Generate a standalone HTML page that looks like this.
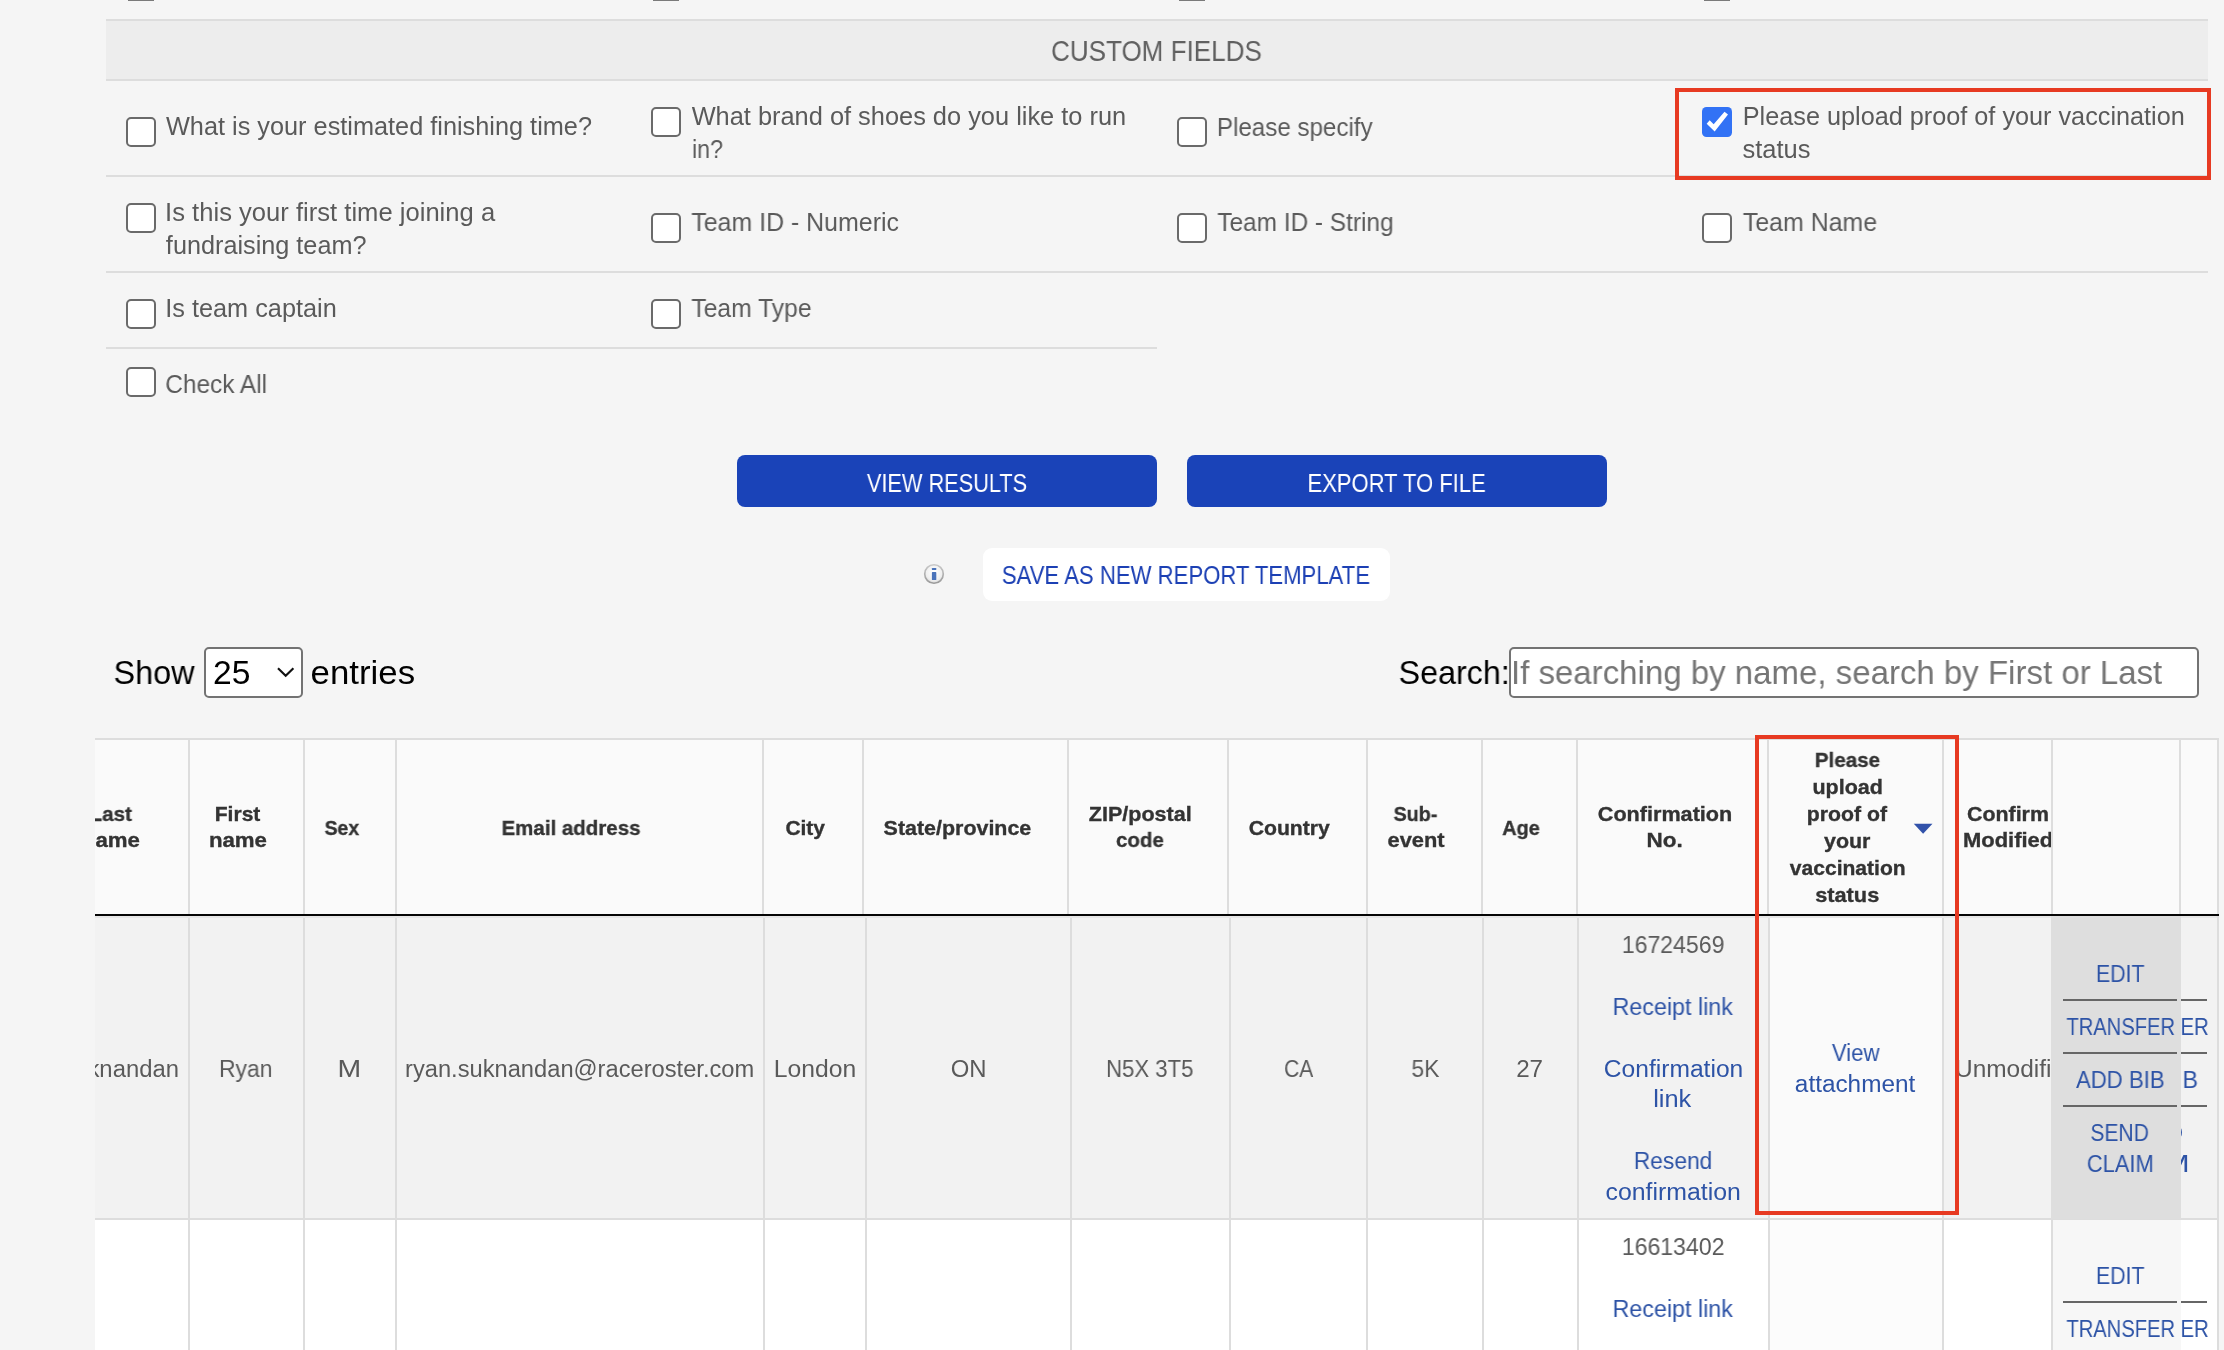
<!DOCTYPE html><html><head><meta charset="utf-8"><title>Participant report</title><style>
html,body{margin:0;padding:0}html{width:2224px;height:1350px;overflow:hidden}body{width:2224px;height:1350px;overflow:hidden;position:relative;background:#f5f5f5;font-family:"Liberation Sans",sans-serif}
.b{position:absolute}.t{position:absolute;left:0;top:0;white-space:nowrap;transform-origin:0 0;display:block;will-change:transform}
.g{position:absolute;left:0;top:0;width:2224px;height:1350px}
.cb{position:absolute;width:26px;height:26px;border:2px solid #6a6a6a;border-radius:5px;background:#fff}
</style></head><body>
<div class="b" style="left:106px;top:21px;width:2102px;height:58px;background:#ededed;"></div>
<div class="b" style="left:106px;top:19px;width:2102px;height:2px;background:#dddddd;"></div>
<div class="b" style="left:106px;top:79px;width:2102px;height:2px;background:#dddddd;"></div>
<div class="b" style="left:106px;top:175px;width:2102px;height:2px;background:#dddddd;"></div>
<div class="b" style="left:106px;top:271px;width:2102px;height:2px;background:#dddddd;"></div>
<div class="b" style="left:106px;top:347px;width:1051px;height:2px;background:#dddddd;"></div>
<div class="b" style="left:128px;top:0px;width:26px;height:1px;background:#7a7a7a;"></div>
<div class="b" style="left:653px;top:0px;width:26px;height:1px;background:#7a7a7a;"></div>
<div class="b" style="left:1179px;top:0px;width:26px;height:1px;background:#7a7a7a;"></div>
<div class="b" style="left:1704px;top:0px;width:26px;height:1px;background:#7a7a7a;"></div>
<div class="cb" style="left:126px;top:117px"></div>
<div class="cb" style="left:651px;top:107px"></div>
<div class="cb" style="left:1177px;top:117px"></div>
<div class="cb" style="left:126px;top:203px"></div>
<div class="cb" style="left:651px;top:213px"></div>
<div class="cb" style="left:1177px;top:213px"></div>
<div class="cb" style="left:1702px;top:213px"></div>
<div class="cb" style="left:126px;top:299px"></div>
<div class="cb" style="left:651px;top:299px"></div>
<div class="cb" style="left:126px;top:367px"></div>
<svg class="b" style="left:1702px;top:107px" width="30" height="30" viewBox="0 0 30 30"><rect width="30" height="30" rx="4.5" fill="#3272f5"/><polygon points="4.67,16.67 7.67,13.17 11.67,17.33 22.5,4.67 26,7.5 12.67,24.5" fill="#fff"/></svg>
<div class="b" style="left:737px;top:455px;width:420px;height:52px;background:#1a43b8;border-radius:8px"></div>
<div class="b" style="left:1187px;top:455px;width:420px;height:52px;background:#1a43b8;border-radius:8px"></div>
<div class="b" style="left:983px;top:548px;width:407px;height:53px;background:#ffffff;border-radius:9px"></div>
<svg class="b" style="left:922px;top:562px;filter:blur(0.45px)" width="24" height="24" viewBox="0 0 24 24"><defs><radialGradient id="ig" cx="50%" cy="40%" r="60%"><stop offset="0" stop-color="#ffffff"/><stop offset="0.7" stop-color="#f0f0f0"/><stop offset="1" stop-color="#d8d8d8"/></radialGradient><linearGradient id="ir" x1="0" y1="0" x2="0" y2="1"><stop offset="0" stop-color="#c8c8c8"/><stop offset="1" stop-color="#9a9a9a"/></linearGradient></defs><circle cx="12" cy="12" r="9.3" fill="url(#ig)" stroke="url(#ir)" stroke-width="1.6"/><rect x="9.9" y="6" width="4.4" height="2" rx="0.6" fill="#4a73ba"/><rect x="9.9" y="10.1" width="4.4" height="8" rx="0.6" fill="#4a73ba"/></svg>
<div class="b" style="left:204px;top:647px;width:99px;height:51px;background:#ffffff;box-sizing:border-box;border:2px solid #737373;border-radius:5px"></div>
<svg class="b" style="left:274px;top:662px" width="24" height="20" viewBox="0 0 24 20"><polyline points="4,6.3 11.7,13.7 19.4,6.3" fill="none" stroke="#111" stroke-width="2.2"/></svg>
<div class="b" style="left:1509px;top:647px;width:690px;height:51px;background:#ffffff;box-sizing:border-box;border:2px solid #737373;border-radius:5px"></div>
<div class="b" style="left:95px;top:738px;width:2124px;height:2px;background:#dddddd;"></div>
<div class="b" style="left:95px;top:740px;width:2124px;height:174px;background:#fafafa;"></div>
<div class="b" style="left:95px;top:916px;width:2124px;height:302px;background:#f2f2f2;"></div>
<div class="b" style="left:95px;top:1218px;width:2124px;height:2px;background:#dddddd;"></div>
<div class="b" style="left:95px;top:1220px;width:2124px;height:130px;background:#ffffff;"></div>
<div class="b" style="left:1770px;top:916px;width:172px;height:302px;background:#fafafa;"></div>
<div class="b" style="left:1770px;top:1220px;width:172px;height:130px;background:#fcfcfc;"></div>
<div class="b" style="left:188px;top:740px;width:2px;height:174px;background:#dddddd;"></div>
<div class="b" style="left:303px;top:740px;width:2px;height:174px;background:#dddddd;"></div>
<div class="b" style="left:395px;top:740px;width:2px;height:174px;background:#dddddd;"></div>
<div class="b" style="left:762px;top:740px;width:2px;height:174px;background:#dddddd;"></div>
<div class="b" style="left:862px;top:740px;width:2px;height:174px;background:#dddddd;"></div>
<div class="b" style="left:1067px;top:740px;width:2px;height:174px;background:#dddddd;"></div>
<div class="b" style="left:1227px;top:740px;width:2px;height:174px;background:#dddddd;"></div>
<div class="b" style="left:1366px;top:740px;width:2px;height:174px;background:#dddddd;"></div>
<div class="b" style="left:1481px;top:740px;width:2px;height:174px;background:#dddddd;"></div>
<div class="b" style="left:1576px;top:740px;width:2px;height:174px;background:#dddddd;"></div>
<div class="b" style="left:1767px;top:740px;width:2px;height:174px;background:#dddddd;"></div>
<div class="b" style="left:1942px;top:740px;width:2px;height:174px;background:#dddddd;"></div>
<div class="b" style="left:2051px;top:740px;width:2px;height:174px;background:#dddddd;"></div>
<div class="b" style="left:2179px;top:740px;width:2px;height:174px;background:#dddddd;"></div>
<div class="b" style="left:188px;top:916px;width:2px;height:434px;background:#dddddd;"></div>
<div class="b" style="left:303px;top:916px;width:2px;height:434px;background:#dddddd;"></div>
<div class="b" style="left:395px;top:916px;width:2px;height:434px;background:#dddddd;"></div>
<div class="b" style="left:763px;top:916px;width:2px;height:434px;background:#dddddd;"></div>
<div class="b" style="left:865px;top:916px;width:2px;height:434px;background:#dddddd;"></div>
<div class="b" style="left:1070px;top:916px;width:2px;height:434px;background:#dddddd;"></div>
<div class="b" style="left:1229px;top:916px;width:2px;height:434px;background:#dddddd;"></div>
<div class="b" style="left:1366px;top:916px;width:2px;height:434px;background:#dddddd;"></div>
<div class="b" style="left:1482px;top:916px;width:2px;height:434px;background:#dddddd;"></div>
<div class="b" style="left:1577px;top:916px;width:2px;height:434px;background:#dddddd;"></div>
<div class="b" style="left:1768px;top:916px;width:2px;height:434px;background:#dddddd;"></div>
<div class="b" style="left:1942px;top:916px;width:2px;height:434px;background:#dddddd;"></div>
<div class="b" style="left:2217px;top:738px;width:2px;height:612px;background:#dddddd;"></div>
<div class="b" style="left:95px;top:914px;width:2124px;height:2px;background:#050505;"></div>
<div class="b" style="left:95px;top:916px;width:1956px;height:2px;background:#e7e7e7;"></div>
<div class="b" style="left:2181px;top:916px;width:36px;height:2px;background:#e7e7e7;"></div>
<div class="b" style="left:2051px;top:916px;width:130px;height:303px;background:#dedede;"></div>
<div class="b" style="left:2051px;top:1220px;width:2px;height:130px;background:#dddddd;"></div>
<div class="b" style="left:2053px;top:1220px;width:128px;height:130px;background:#f7f7f7;"></div>
<div class="b" style="left:2063px;top:999px;width:114px;height:2px;background:#666666;"></div>
<div class="b" style="left:2181px;top:999px;width:26px;height:2px;background:#666666;"></div>
<div class="b" style="left:2063px;top:1052px;width:114px;height:2px;background:#666666;"></div>
<div class="b" style="left:2181px;top:1052px;width:26px;height:2px;background:#666666;"></div>
<div class="b" style="left:2063px;top:1105px;width:114px;height:2px;background:#666666;"></div>
<div class="b" style="left:2181px;top:1105px;width:26px;height:2px;background:#666666;"></div>
<div class="b" style="left:2063px;top:1301px;width:114px;height:2px;background:#666666;"></div>
<div class="b" style="left:2181px;top:1301px;width:26px;height:2px;background:#666666;"></div>
<svg class="b" style="left:1913px;top:823px" width="21" height="12" viewBox="0 0 21 12"><polygon points="0.75,0.75 19.5,0.75 10.1,10.75" fill="#3152aa"/></svg>
<span class="t" style="font-size:29.12px;line-height:29.12px;color:#606060;transform:translate(1051.07px,37px) scaleX(0.8943)">CUSTOM FIELDS</span><span class="t" style="font-size:24.96px;line-height:24.96px;color:#5a5a5a;transform:translate(165.93px,114px) scaleX(1.0139)">What is your estimated finishing time?</span><span class="t" style="font-size:24.96px;line-height:24.96px;color:#5a5a5a;transform:translate(691.63px,104px) scaleX(1.0171)">What brand of shoes do you like to run</span><span class="t" style="font-size:24.96px;line-height:24.96px;color:#5a5a5a;transform:translate(692.02px,137px) scaleX(0.9272)">in?</span><span class="t" style="font-size:24.96px;line-height:24.96px;color:#5a5a5a;transform:translate(1216.89px,115px) scaleX(0.9676)">Please specify</span><span class="t" style="font-size:24.96px;line-height:24.96px;color:#5a5a5a;transform:translate(1742.76px,104px) scaleX(1.0116)">Please upload proof of your vaccination</span><span class="t" style="font-size:24.96px;line-height:24.96px;color:#5a5a5a;transform:translate(1742.45px,137px) scaleX(1.0217)">status</span><span class="t" style="font-size:24.96px;line-height:24.96px;color:#5a5a5a;transform:translate(165.09px,200px) scaleX(1.0258)">Is this your first time joining a</span><span class="t" style="font-size:24.96px;line-height:24.96px;color:#5a5a5a;transform:translate(165.87px,233px) scaleX(1.0115)">fundraising team?</span><span class="t" style="font-size:24.96px;line-height:24.96px;color:#5a5a5a;transform:translate(691.34px,210px) scaleX(0.9980)">Team ID - Numeric</span><span class="t" style="font-size:24.96px;line-height:24.96px;color:#5a5a5a;transform:translate(1217.34px,210px) scaleX(0.9774)">Team ID - String</span><span class="t" style="font-size:24.96px;line-height:24.96px;color:#5a5a5a;transform:translate(1742.87px,210px) scaleX(0.9976)">Team Name</span><span class="t" style="font-size:24.96px;line-height:24.96px;color:#5a5a5a;transform:translate(165.19px,296px) scaleX(1.0140)">Is team captain</span><span class="t" style="font-size:24.96px;line-height:24.96px;color:#5a5a5a;transform:translate(691.34px,296px) scaleX(0.9891)">Team Type</span><span class="t" style="font-size:24.96px;line-height:24.96px;color:#5a5a5a;transform:translate(165.24px,372px) scaleX(0.9787)">Check All</span><span class="t" style="font-size:26.52px;line-height:26.52px;color:#ffffff;transform:translate(866.89px,470px) scaleX(0.8197)">VIEW RESULTS</span><span class="t" style="font-size:26.52px;line-height:26.52px;color:#ffffff;transform:translate(1307.45px,470px) scaleX(0.8306)">EXPORT TO FILE</span><span class="t" style="font-size:26.0px;line-height:26.0px;color:#1c40b4;transform:translate(1001.84px,562px) scaleX(0.8512)">SAVE AS NEW REPORT TEMPLATE</span><span class="t" style="font-size:33.28px;line-height:33.28px;color:#000000;transform:translate(113.53px,656px) scaleX(0.9729)">Show</span><span class="t" style="font-size:33.28px;line-height:33.28px;color:#000000;transform:translate(213.02px,656px) scaleX(1.0103)">25</span><span class="t" style="font-size:33.28px;line-height:33.28px;color:#000000;transform:translate(310.58px,656px) scaleX(1.0462)">entries</span><span class="t" style="font-size:33.28px;line-height:33.28px;color:#000000;transform:translate(1398.58px,656px) scaleX(0.9691)">Search:</span><span class="t" style="font-size:33.28px;line-height:33.28px;color:#757575;transform:translate(1510.98px,656px) scaleX(0.9922)">If searching by name, search by First or Last</span><span class="t" style="font-size:20.8px;line-height:20.8px;color:#333333;transform:translate(214.72px,804px) scaleX(1.0131);font-weight:700;-webkit-text-stroke:0.35px #333333">First</span><span class="t" style="font-size:20.8px;line-height:20.8px;color:#333333;transform:translate(208.88px,830px) scaleX(1.0697);font-weight:700;-webkit-text-stroke:0.35px #333333">name</span><span class="t" style="font-size:20.8px;line-height:20.8px;color:#333333;transform:translate(324.62px,818px) scaleX(0.9319);font-weight:700;-webkit-text-stroke:0.35px #333333">Sex</span><span class="t" style="font-size:20.8px;line-height:20.8px;color:#333333;transform:translate(501.53px,818px) scaleX(0.9851);font-weight:700;-webkit-text-stroke:0.35px #333333">Email address</span><span class="t" style="font-size:20.8px;line-height:20.8px;color:#333333;transform:translate(785.38px,818px) scaleX(1.0068);font-weight:700;-webkit-text-stroke:0.35px #333333">City</span><span class="t" style="font-size:20.8px;line-height:20.8px;color:#333333;transform:translate(883.58px,818px) scaleX(1.0307);font-weight:700;-webkit-text-stroke:0.35px #333333">State/province</span><span class="t" style="font-size:20.8px;line-height:20.8px;color:#333333;transform:translate(1088.78px,804px) scaleX(1.0349);font-weight:700;-webkit-text-stroke:0.35px #333333">ZIP/postal</span><span class="t" style="font-size:20.8px;line-height:20.8px;color:#333333;transform:translate(1116.03px,830px) scaleX(0.9845);font-weight:700;-webkit-text-stroke:0.35px #333333">code</span><span class="t" style="font-size:20.8px;line-height:20.8px;color:#333333;transform:translate(1248.65px,818px) scaleX(1.0188);font-weight:700;-webkit-text-stroke:0.35px #333333">Country</span><span class="t" style="font-size:20.8px;line-height:20.8px;color:#333333;transform:translate(1393.57px,804px) scaleX(0.9483);font-weight:700;-webkit-text-stroke:0.35px #333333">Sub-</span><span class="t" style="font-size:20.8px;line-height:20.8px;color:#333333;transform:translate(1387.53px,830px) scaleX(1.0509);font-weight:700;-webkit-text-stroke:0.35px #333333">event</span><span class="t" style="font-size:20.8px;line-height:20.8px;color:#333333;transform:translate(1502.23px,818px) scaleX(0.9546);font-weight:700;-webkit-text-stroke:0.35px #333333">Age</span><span class="t" style="font-size:20.8px;line-height:20.8px;color:#333333;transform:translate(1597.79px,804px) scaleX(1.0390);font-weight:700;-webkit-text-stroke:0.35px #333333">Confirmation</span><span class="t" style="font-size:20.8px;line-height:20.8px;color:#333333;transform:translate(1646.62px,830px) scaleX(1.0791);font-weight:700;-webkit-text-stroke:0.35px #333333">No.</span><span class="t" style="font-size:20.8px;line-height:20.8px;color:#333333;transform:translate(1814.76px,750px) scaleX(0.9913);font-weight:700;-webkit-text-stroke:0.35px #333333">Please</span><span class="t" style="font-size:20.8px;line-height:20.8px;color:#333333;transform:translate(1812.45px,777px) scaleX(1.0320);font-weight:700;-webkit-text-stroke:0.35px #333333">upload</span><span class="t" style="font-size:20.8px;line-height:20.8px;color:#333333;transform:translate(1806.86px,804px) scaleX(1.0207);font-weight:700;-webkit-text-stroke:0.35px #333333">proof of</span><span class="t" style="font-size:20.8px;line-height:20.8px;color:#333333;transform:translate(1823.96px,831px) scaleX(1.0306);font-weight:700;-webkit-text-stroke:0.35px #333333">your</span><span class="t" style="font-size:20.8px;line-height:20.8px;color:#333333;transform:translate(1789.71px,858px) scaleX(1.0141);font-weight:700;-webkit-text-stroke:0.35px #333333">vaccination</span><span class="t" style="font-size:20.8px;line-height:20.8px;color:#333333;transform:translate(1815.19px,885px) scaleX(1.0455);font-weight:700;-webkit-text-stroke:0.35px #333333">status</span><span class="t" style="font-size:20.8px;line-height:20.8px;color:#333333;transform:translate(1967.03px,804px) scaleX(1.0268);font-weight:700;-webkit-text-stroke:0.35px #333333">Confirm</span><span class="t" style="font-size:23.3px;line-height:23.3px;color:#5a5a5a;transform:translate(219.03px,1058px) scaleX(0.9813)">Ryan</span><span class="t" style="font-size:23.3px;line-height:23.3px;color:#5a5a5a;transform:translate(337.55px,1058px) scaleX(1.2190)">M</span><span class="t" style="font-size:23.3px;line-height:23.3px;color:#5a5a5a;transform:translate(405.00px,1058px) scaleX(1.0167)">ryan.suknandan@raceroster.com</span><span class="t" style="font-size:23.3px;line-height:23.3px;color:#5a5a5a;transform:translate(773.82px,1058px) scaleX(1.0600)">London</span><span class="t" style="font-size:23.3px;line-height:23.3px;color:#5a5a5a;transform:translate(950.71px,1058px) scaleX(1.0250)">ON</span><span class="t" style="font-size:23.3px;line-height:23.3px;color:#5a5a5a;transform:translate(1106.10px,1058px) scaleX(0.9496)">N5X 3T5</span><span class="t" style="font-size:23.3px;line-height:23.3px;color:#5a5a5a;transform:translate(1283.99px,1058px) scaleX(0.9080)">CA</span><span class="t" style="font-size:23.3px;line-height:23.3px;color:#5a5a5a;transform:translate(1411.42px,1058px) scaleX(0.9809)">5K</span><span class="t" style="font-size:23.3px;line-height:23.3px;color:#5a5a5a;transform:translate(1516.14px,1058px) scaleX(1.0392)">27</span><span class="t" style="font-size:23.3px;line-height:23.3px;color:#5a5a5a;transform:translate(1621.81px,934px) scaleX(0.9900)">16724569</span><span class="t" style="font-size:23.3px;line-height:23.3px;color:#2d53a6;transform:translate(1612.53px,996px) scaleX(0.9992)">Receipt link</span><span class="t" style="font-size:23.3px;line-height:23.3px;color:#5a5a5a;transform:translate(1621.81px,1236px) scaleX(0.9904)">16613402</span><span class="t" style="font-size:23.3px;line-height:23.3px;color:#2d53a6;transform:translate(1612.53px,1298px) scaleX(0.9992)">Receipt link</span><span class="t" style="font-size:23.3px;line-height:23.3px;color:#2d53a6;transform:translate(1603.81px,1058px) scaleX(1.0557)">Confirmation</span><span class="t" style="font-size:23.3px;line-height:23.3px;color:#2d53a6;transform:translate(1653.16px,1088px) scaleX(1.0909)">link</span><span class="t" style="font-size:23.3px;line-height:23.3px;color:#2d53a6;transform:translate(1633.80px,1150px) scaleX(0.9778)">Resend</span><span class="t" style="font-size:23.3px;line-height:23.3px;color:#2d53a6;transform:translate(1605.50px,1181px) scaleX(1.0667)">confirmation</span><span class="t" style="font-size:23.3px;line-height:23.3px;color:#2d53a6;transform:translate(1831.88px,1042px) scaleX(0.9516)">View</span><span class="t" style="font-size:23.3px;line-height:23.3px;color:#2d53a6;transform:translate(1794.84px,1073px) scaleX(1.0448)">attachment</span>
<div class="g" style="clip-path:inset(0 0 0 95px)"><span class="t" style="font-size:20.8px;line-height:20.8px;color:#333333;transform:translate(89.48px,804px) scaleX(0.9934);font-weight:700;-webkit-text-stroke:0.35px #333333">Last</span><span class="t" style="font-size:20.8px;line-height:20.8px;color:#333333;transform:translate(81.88px,830px) scaleX(1.0697);font-weight:700;-webkit-text-stroke:0.35px #333333">name</span><span class="t" style="font-size:23.3px;line-height:23.3px;color:#5a5a5a;transform:translate(58.27px,1058px) scaleX(1.0238)">Suknandan</span></div>
<div class="g" style="clip-path:inset(0 173px 0 0)"><span class="t" style="font-size:20.8px;line-height:20.8px;color:#333333;transform:translate(1962.98px,830px) scaleX(1.0557);font-weight:700;-webkit-text-stroke:0.35px #333333">Modified</span><span class="t" style="font-size:23.3px;line-height:23.3px;color:#5a5a5a;transform:translate(1954.99px,1058px) scaleX(1.0485)">Unmodified</span></div>
<span class="t" style="font-size:23.3px;line-height:23.3px;color:#2d53a6;transform:translate(2095.95px,963px) scaleX(0.9167)">EDIT</span><span class="t" style="font-size:23.3px;line-height:23.3px;color:#2d53a6;transform:translate(2066.45px,1016px) scaleX(0.8645)">TRANSFER</span><span class="t" style="font-size:23.3px;line-height:23.3px;color:#2d53a6;transform:translate(2076.06px,1069px) scaleX(0.9494)">ADD BIB</span><span class="t" style="font-size:23.3px;line-height:23.3px;color:#2d53a6;transform:translate(2090.42px,1122px) scaleX(0.9025)">SEND</span><span class="t" style="font-size:23.3px;line-height:23.3px;color:#2d53a6;transform:translate(2086.85px,1153px) scaleX(0.9396)">CLAIM</span><span class="t" style="font-size:23.3px;line-height:23.3px;color:#2d53a6;transform:translate(2095.95px,1265px) scaleX(0.9167)">EDIT</span><span class="t" style="font-size:23.3px;line-height:23.3px;color:#2d53a6;transform:translate(2066.45px,1318px) scaleX(0.8645)">TRANSFER</span>
<div class="g" style="clip-path:inset(0 7px 0 2181px)"><span class="t" style="font-size:23.3px;line-height:23.3px;color:#2d53a6;transform:translate(2180.52px,1016px) scaleX(0.8717)">ER</span><span class="t" style="font-size:23.3px;line-height:23.3px;color:#2d53a6;transform:translate(2182.44px,1069px) scaleX(0.9999)">B</span><span class="t" style="font-size:23.3px;line-height:23.3px;color:#2d53a6;transform:translate(2164.03px,1153px) scaleX(1.3199)">M</span><span class="t" style="font-size:23.3px;line-height:23.3px;color:#2d53a6;transform:translate(2163.68px,1122px) scaleX(1.1597)">D</span><span class="t" style="font-size:23.3px;line-height:23.3px;color:#2d53a6;transform:translate(2180.52px,1318px) scaleX(0.8717)">ER</span></div>
<div class="b" style="left:1675px;top:88px;width:536px;height:92px;background:transparent;box-sizing:border-box;border:4px solid #e73a22"></div>
<div class="b" style="left:1755px;top:735px;width:204px;height:480px;background:transparent;box-sizing:border-box;border:4px solid #e73a22"></div>
</body></html>
